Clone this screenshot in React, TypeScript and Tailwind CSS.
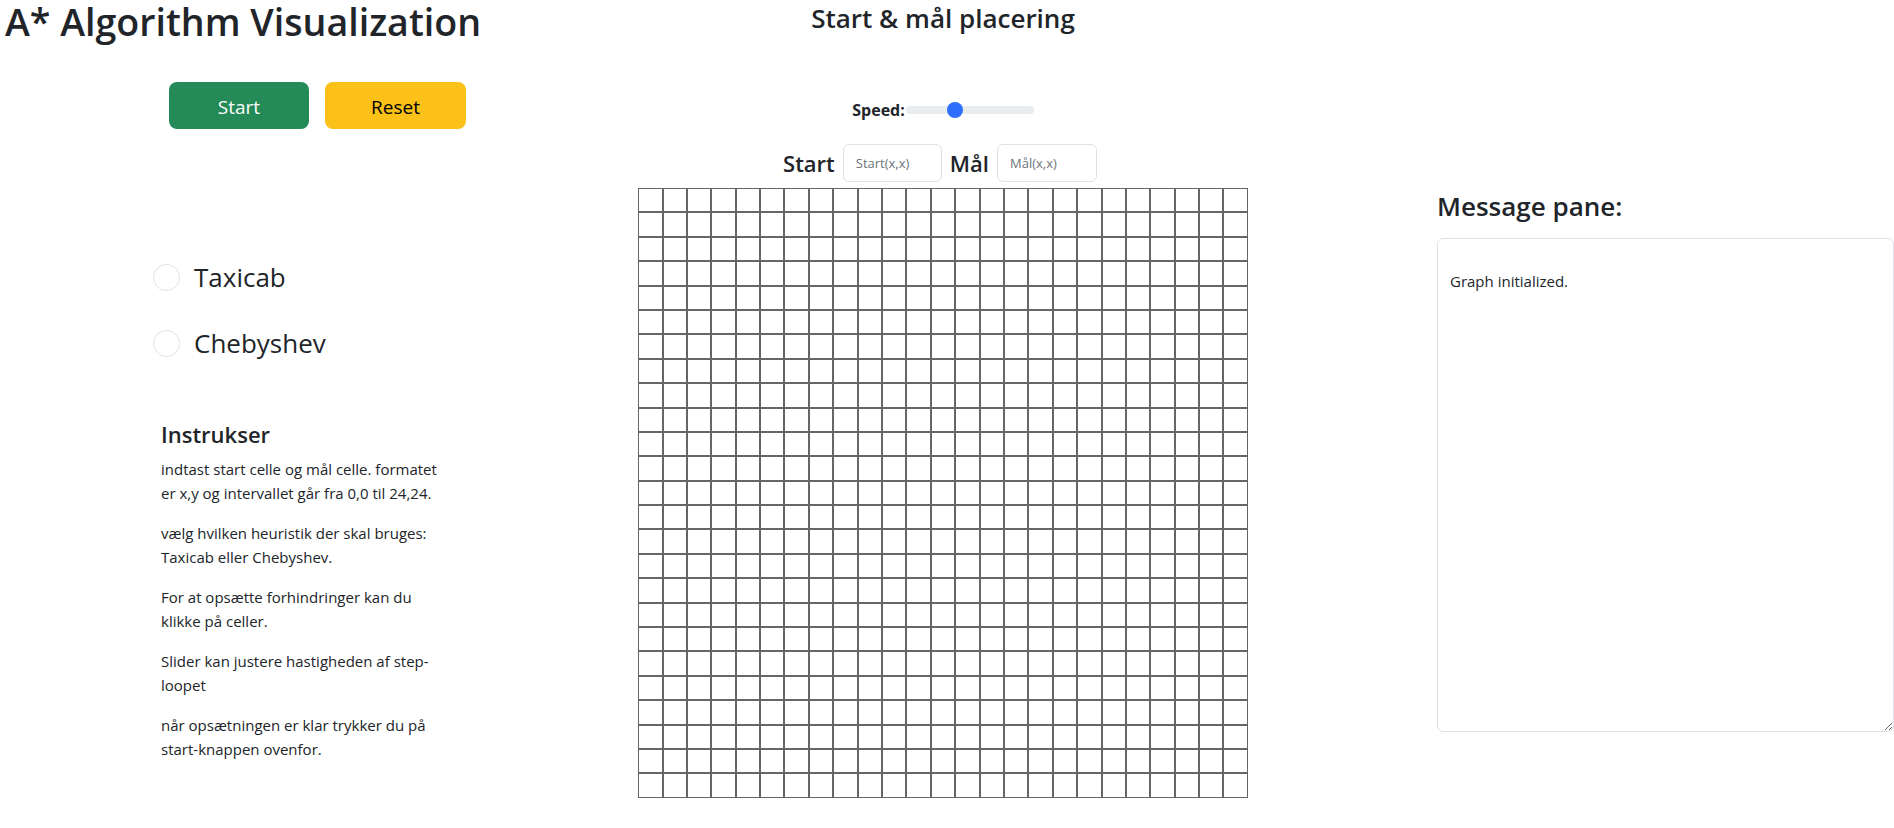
// A* visualisering – start/mål, heuristik og beskeder
const font = "font-['Open_Sans',sans-serif]";

const cells = Array.from({ length: 25 * 25 }, (_, i) => i);

const instructions: string[][] = [
  ['indtast start celle og mål celle. formatet', 'er x,y og intervallet går fra 0,0 til 24,24.'],
  ['vælg hvilken heuristik der skal bruges:', 'Taxicab eller Chebyshev.'],
  ['For at opsætte forhindringer kan du', 'klikke på celler.'],
  ['Slider kan justere hastigheden af step-', 'loopet'],
  ['når opsætningen er klar trykker du på', 'start-knappen ovenfor.'],
];

const Radio = ({ label }: { label: string }) => (
  <label className="flex items-center h-10 gap-[14px] cursor-pointer">
    <span className="size-[27px] rounded-full border border-[#dee2e6] bg-white" />
    <span className="text-[26px] text-[#212529]">{label}</span>
  </label>
);

const App = () => {
  return (
    <div className={`${font} flex w-[1894px] min-h-[828px] bg-white text-[#212529]`}>
      {/* venstre kolonne */}
      <div className="w-[490px] shrink-0 flex flex-col">
        <h1 className="text-[37.6px] leading-[44px] font-semibold pl-[5px] whitespace-nowrap">
          A* Algorithm Visualization
        </h1>
        <div className="flex gap-4 mt-[38px] ml-[169px]">
          <button className="w-[140px] h-[47px] rounded-lg bg-[#238a58] text-white text-[19px] leading-[47px] pt-[2px]">
            Start
          </button>
          <button className="w-[141px] h-[47px] rounded-lg bg-[#fbc118] text-black text-[19px] leading-[47px] pt-[2px]">
            Reset
          </button>
        </div>
        <div className="flex flex-col gap-[26px] mt-[128px] ml-[153px]">
          <Radio label="Taxicab" />
          <Radio label="Chebyshev" />
        </div>
        <div className="ml-[161px] mt-[57px]">
          <h4 className="text-[22px] leading-[29px] font-semibold mb-2">Instrukser</h4>
          {instructions.map((lines, i) => (
            <p key={i} className="text-[15px] leading-6 mb-4">
              {lines[0]}
              <br />
              {lines[1]}
            </p>
          ))}
        </div>
      </div>

      {/* midten */}
      <div className="w-[906px] shrink-0 flex flex-col items-center">
        <h3 className="text-[26px] leading-[34px] font-semibold mt-[1px]">Start &amp; mål placering</h3>
        <div className="flex items-center mt-[67px] h-4">
          <span className="text-[16px] font-bold">Speed:</span>
          <div className="relative w-[128px] h-2 rounded-full bg-[#e9ecef] ml-[1px]">
            <span className="absolute top-1/2 left-[41px] -translate-y-1/2 size-4 rounded-full bg-[#2f6dfd]" />
          </div>
        </div>
        <div className="flex items-center mt-[26px] h-[38px] -ml-[6px]">
          <span className="text-[22px] font-semibold mr-[8px]">Start</span>
          <input
            placeholder="Start(x,x)"
            className="w-[99px] h-[38px] px-3 text-[13px] border border-[#dee2e6] rounded-md placeholder:text-[#6c757d] outline-none"
          />
          <span className="text-[22px] font-semibold ml-[8px] mr-[8px]">Mål</span>
          <input
            placeholder="Mål(x,x)"
            className="w-[100px] h-[38px] px-3 text-[13px] border border-[#dee2e6] rounded-md placeholder:text-[#6c757d] outline-none"
          />
        </div>
        <div className="grid grid-cols-[repeat(25,24.4px)] mt-[6px]">
          {cells.map((c) => (
            <div key={c} className="h-[24.4px] border border-[#666] bg-white" />
          ))}
        </div>
      </div>

      {/* beskeder */}
      <div className="flex-1 flex flex-col pl-[41px]">
        <h3 className="text-[26px] leading-[34px] font-semibold mt-[189px]">Message pane:</h3>
        <textarea
          readOnly
          defaultValue={'\nGraph initialized.'}
          className="mt-[15px] w-[457px] h-[494px] border border-[#dee2e6] rounded-md px-3 py-[6px] text-[15px] leading-6 outline-none resize-y"
        />
      </div>
    </div>
  );
};

export default App;
